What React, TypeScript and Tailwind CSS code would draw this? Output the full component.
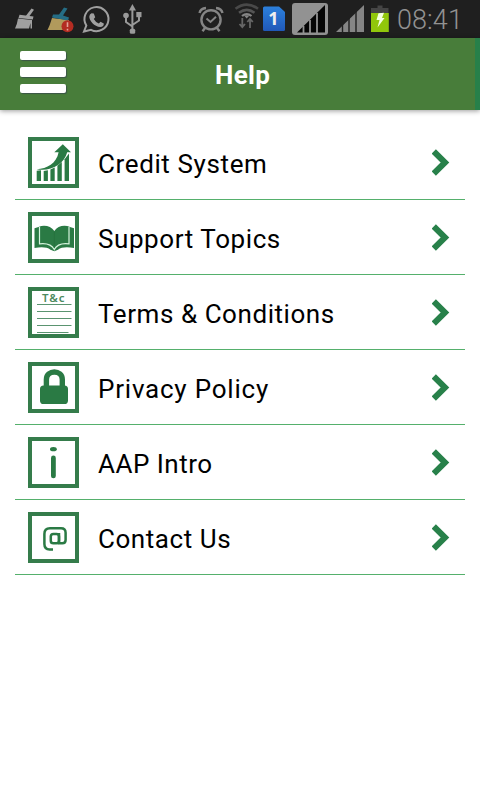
import type { ReactNode } from 'react'

const GREEN = '#2a7a44'

function CreditIcon() {
  return (
    <svg viewBox="0 0 51 51" className="w-[51px] h-[51px]" fill={GREEN}>
      <path d="M8.7 33.8L13 33.3V44H8.7z" />
      <path d="M15.7 34L19.9 33.2V44H15.7z" />
      <path d="M22.4 32.6L26.7 30.5V44H22.4z" />
      <path d="M29.4 28.8L33.8 25V44H29.4z" />
      <path d="M36.6 22.3L41 16.5V44H36.6z" />
      <path d="M8.7 32.2C19 31.5 28.5 26.5 30.6 15.2H26.3L34.8 7.3L43 15.2H39.2C36 27.5 22 35 8.7 32.2z" />
    </svg>
  )
}

function TopicsIcon() {
  return (
    <svg viewBox="0 0 51 51" className="w-[51px] h-[51px]" fill={GREEN}>
      <path d="M6.5 16.3L10.5 15C16 12.5 23 14 26.3 19C29.5 14 36.5 12.5 42 15L46 16.3V36C39 34.8 33.5 35 30 37.8L26.3 39.2L22.5 37.8C19 35 13.5 34.8 6.5 36z" />
      <path d="M11.5 15V31.8C18 31 24 33 26.3 37.6C28.6 33 34.5 31 41 31.8V15" fill="none" stroke="#d5f3dc" strokeWidth="1.2" />
      <path d="M26.3 20V36" stroke="#226b39" strokeWidth="0.6" />
    </svg>
  )
}

function TermsIcon() {
  return (
    <svg viewBox="0 0 51 51" className="w-[51px] h-[51px]">
      <text x="14" y="14.6" textLength="22.5" fontSize="11.5" fontWeight="600" fill="#4c8a60" fontFamily="'Noto Sans', sans-serif">T&amp;c</text>
      <path d="M9 17.5H43.5M9 24.5H43.5M9 31.5H43.5M9 38.5H43.5M9 45.5H40.5" stroke="#5a9470" strokeWidth="1" />
    </svg>
  )
}

function PrivacyIcon() {
  return (
    <svg viewBox="0 0 51 51" className="w-[51px] h-[51px]" fill={GREEN}>
      <path d="M18.4 26V17.5C18.4 7.5 34.3 7.5 34.3 17.5V26" fill="none" stroke={GREEN} strokeWidth="5.4" />
      <rect x="12" y="23.5" width="28" height="18.5" rx="3.6" />
    </svg>
  )
}

function IntroIcon() {
  return (
    <svg viewBox="0 0 51 51" className="w-[51px] h-[51px]" fill={GREEN}>
      <ellipse cx="25.4" cy="12.2" rx="3.4" ry="2.1" />
      <rect x="23" y="18.5" width="4.8" height="22.8" rx="2.4" />
    </svg>
  )
}

function ContactIcon() {
  return (
    <svg viewBox="0 0 51 51" className="w-[51px] h-[51px]" fill="none" stroke={GREEN} strokeWidth="2.5">
      <rect x="22.8" y="22" width="8.2" height="9.3" rx="2.6" />
      <path d="M31 21V31.3H34.3Q37.6 31.3 37.6 28V20.8Q37.6 16.3 33 16.3H22Q16.4 16.3 16.4 22V32Q16.4 37.4 21.6 37.4H25" />
    </svg>
  )
}

const items: { label: string; icon: ReactNode; spacing: string }[] = [
  { label: 'Credit System', icon: <CreditIcon />, spacing: 'tracking-[0.62px]' },
  { label: 'Support Topics', icon: <TopicsIcon />, spacing: 'tracking-[0.58px]' },
  { label: 'Terms & Conditions', icon: <TermsIcon />, spacing: 'tracking-[0.56px]' },
  { label: 'Privacy Policy', icon: <PrivacyIcon />, spacing: 'tracking-[0.78px]' },
  { label: 'AAP Intro', icon: <IntroIcon />, spacing: 'tracking-[0.5px]' },
  { label: 'Contact Us', icon: <ContactIcon />, spacing: 'tracking-[0.55px]' },
]

function StatusBar() {
  return (
    <div className="h-[38px] bg-[#1f1f1f] flex items-center justify-between pr-[17px]">
      <svg viewBox="0 0 390 38" className="w-[390px] h-[38px] shrink-0">
        {/* cleaner */}
        <g fill="#a0a0a0">
          <path d="M31.5 8.5L34 9.7L29.5 16H25.8z" />
          <path d="M19.5 14.8L33.5 16.5L32.8 19.5L18.5 18z" />
          <path d="M18 18.5L32 20V28.5H30.5V23L29 28.5H15Q17 25 18 18.5z" />
        </g>
        {/* cleaner with alert */}
        <path d="M52 18L69 20L68 30H47.5Q50 25 52 18z" fill="#b19a5c" />
        <path d="M64 7.5L67.5 8.5L63 15.5L69 17.5L68 20.5L52 17.5L53 14.5L59 14.5z" fill="#256d85" />
        <circle cx="67.5" cy="26.3" r="6" fill="#b32c22" />
        <path d="M67.5 22.3V27.1M67.5 28.8V30.6" stroke="#e2a29a" strokeWidth="1.6" />
        {/* whatsapp */}
        <path d="M84 31.5L86.3 25.5A12 12 0 1 1 91 29.8z" fill="none" stroke="#a0a0a0" strokeWidth="2" />
        <path d="M91.5 13.2L93.8 13.5L95.2 17.2L93.8 19Q95.8 22.5 98.8 23.5L100.5 21.8L103.8 23.6Q104 27 100.2 27C94.5 26.8 89 20.5 89.3 16.5Q89.5 14 91.5 13.2z" fill="#a0a0a0" />
        {/* usb */}
        <g stroke="#9a9a9a" strokeWidth="2" fill="none">
          <path d="M132.4 8V31M132.4 26.5L126 22V16M132.4 25L139 20.5V14" />
        </g>
        <g fill="#9a9a9a">
          <path d="M132.4 4L136 10.5H129z" />
          <circle cx="126" cy="15.5" r="2.8" />
          <rect x="136.3" y="12" width="5.2" height="5.2" />
          <rect x="129.8" y="28.7" width="5.4" height="5" rx="1.5" />
        </g>
        {/* alarm */}
        <g stroke="#858585" fill="none">
          <circle cx="211" cy="19.8" r="9.6" strokeWidth="2.4" />
          <path d="M206.5 18.5L210.5 22L216 16.8" strokeWidth="2" />
          <path d="M205 28L202.5 31.3M217 28L219.5 31.3" strokeWidth="2.4" />
          <path d="M199.5 13Q200.5 8.5 206 8M222.5 13Q221.5 8.5 216 8" strokeWidth="2.4" />
        </g>
        {/* wifi */}
        <g fill="none" strokeWidth="2.6">
          <path d="M235.5 8.7Q246.7 .5 258 8.7" stroke="#494949" />
          <path d="M239 12.7Q246.7 7 254.5 12.7" stroke="#555" />
          <path d="M242 16Q246.7 12.2 251.5 16" stroke="#858585" strokeWidth="2.2" />
        </g>
        <path d="M244.3 15.8Q246.7 14.5 249.2 15.8L246.7 18.5z" fill="#858585" />
        <path d="M242.3 18V27M239.5 24L242.3 27.2L245 24M250 28V19.5M247.3 22L250 18.8L252.8 22" stroke="#666" strokeWidth="1.8" fill="none" />
        {/* sim 1 */}
        <defs>
          <linearGradient id="sim" x1="0" y1="0" x2="0" y2="1">
            <stop offset="0" stopColor="#2c80dc" />
            <stop offset="1" stopColor="#2058b8" />
          </linearGradient>
        </defs>
        <path d="M264.5 6.5H279L285 12V29.5Q285 31 283.5 31H264.5Q263 31 263 29.5V8Q263 6.5 264.5 6.5z" fill="url(#sim)" />
        <text x="268.2" y="25.3" fontSize="18" fontWeight="700" fill="#eee" fontFamily="'Noto Sans', sans-serif">1</text>
        {/* boxed signal */}
        <rect x="292" y="3" width="36" height="32" rx="3" fill="#929292" />
        <path d="M297 32.5L325 5V32.5z" fill="#050505" />
        <path d="M303.5 26V33M310 20V33M317 13V33" stroke="#929292" strokeWidth="1.8" />
        {/* signal */}
        <path d="M336 32L364 5V32z" fill="#858585" />
        <path d="M342.5 24V33M349 18V33M356 11V33" stroke="#1f1f1f" strokeWidth="1.4" />
        {/* battery */}
        <path d="M377.5 5.5H382.5V8H388.5V13H371V8H377.5z" fill="#454545" />
        <rect x="371" y="13" width="17.8" height="19" fill="#91c70b" />
        <path d="M378.5 13.3L384 12.7L382 18H384.5L377.5 27.5L379.5 20H376.5z" fill="#f4ffe0" />
      </svg>
      <span className="font-[Roboto] text-[27px] font-light leading-[38px] pt-px tracking-[0.1px] text-[#929292]">08:41</span>
    </div>
  )
}

function Header() {
  return (
    <header className="h-[72px] bg-[#487d3a] border-r-[5px] border-[#27804a] flex items-center relative shadow-[0_1px_5px_rgba(0,0,0,0.4)]">
      <button className="ml-5 mb-1 w-[46px] flex flex-col gap-[7px] shrink-0">
        <span className="h-[9.6px] w-full rounded-[2px] bg-white shadow-[1px_1px_1px_rgba(50,60,80,0.6)]" />
        <span className="h-[9.6px] w-full rounded-[2px] bg-white shadow-[1px_1px_1px_rgba(50,60,80,0.6)]" />
        <span className="h-[9.6px] w-full rounded-[2px] bg-white shadow-[1px_1px_1px_rgba(50,60,80,0.6)]" />
      </button>
      <h1 className="flex-1 pl-[149px] pt-0.5 text-white font-bold text-[26px] tracking-[0.3px] leading-9 font-[Roboto]">Help</h1>
    </header>
  )
}

export default function App() {
  return (
    <div className="w-[480px] h-[800px] bg-white overflow-hidden font-[Roboto]">
      <StatusBar />
      <Header />
      <ul className="px-[15px] pt-[15px]">
        {items.map((item) => (
          <li key={item.label} className="h-[75px] flex items-center pl-[13px] pr-[15px] border-b border-[#55b06c]">
            <div className="w-[51px] h-[51px] relative shrink-0">
              {item.icon}
              <span className="absolute inset-0 border-4 border-[#357c4b]" />
            </div>
            <span className={`flex-1 ml-[19px] pt-1 text-[26px] leading-9 text-black whitespace-nowrap ${item.spacing}`}>{item.label}</span>
            <svg viewBox="0 0 18 27" className="w-[18px] h-[27px] mt-px shrink-0">
              <path d="M1.8 2.5L13 13.5L1.8 24.5" fill="none" stroke="#28814a" strokeWidth="6" />
            </svg>
          </li>
        ))}
      </ul>
    </div>
  )
}
